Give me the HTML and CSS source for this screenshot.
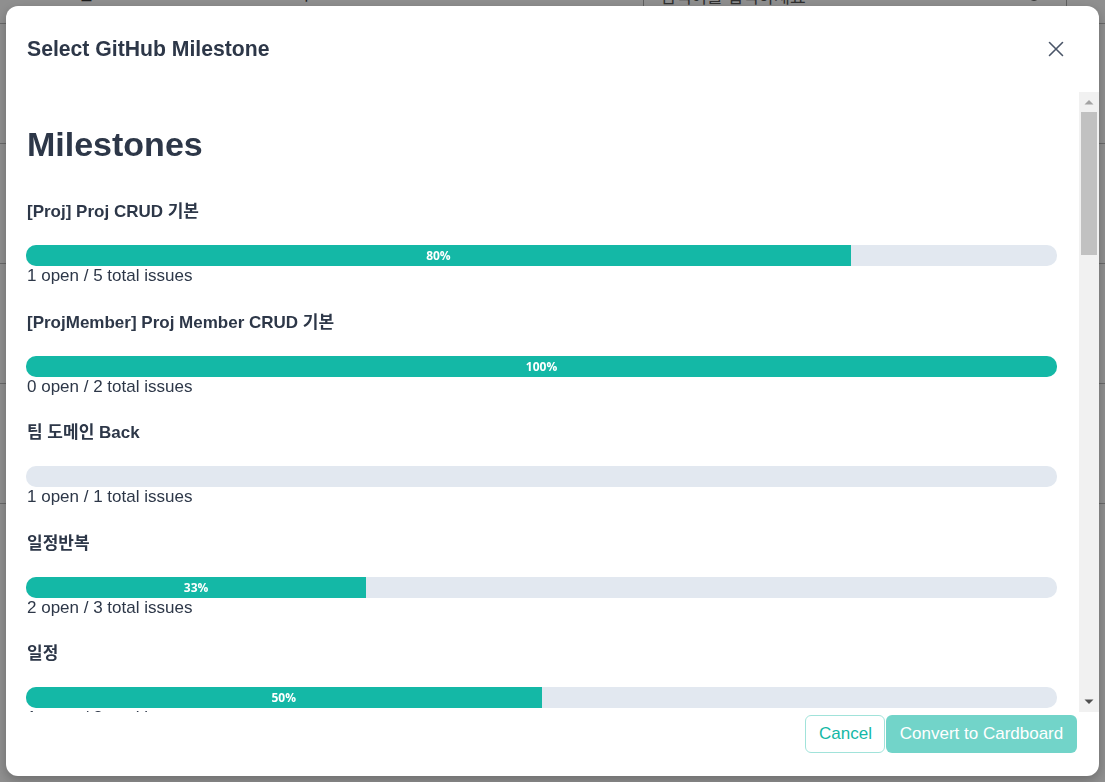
FILE: index.html
```html
<!DOCTYPE html>
<html lang="ko">
<head>
<meta charset="utf-8">
<title>Select GitHub Milestone</title>
<link rel="stylesheet" href="styles.css">
</head>
<body>
<div class="page">
  <div class="page-head">
    <div class="col col-team">팀</div>
    <div class="col col-proj">프로젝트</div>
    <div class="search">
      <span class="search-ph">검색어를 입력하세요</span>
      <svg class="search-ic" width="18" height="18" viewBox="0 0 18 18"><circle cx="8" cy="8" r="6" fill="none" stroke="#333" stroke-width="1.5"/></svg>
    </div>
  </div>
  <div class="page-row"></div>
  <div class="page-row"></div>
  <div class="page-row"></div>
  <div class="page-row"></div>
</div>

<div class="overlay"></div>

<div class="modal" role="dialog" aria-labelledby="modal-title">
  <header class="modal-header">
    <h1 id="modal-title" class="modal-title">Select GitHub Milestone</h1>
    <button class="close-btn" aria-label="Close">
      <svg width="16" height="16" viewBox="0 0 16 16"><path d="M1.5 1.5 L14.5 14.5 M14.5 1.5 L1.5 14.5" stroke="#4a5568" stroke-width="1.6" stroke-linecap="round"/></svg>
    </button>
  </header>

  <div class="modal-body">
    <div class="scroll-area">
      <h2 class="ms-heading">Milestones</h2>
      <ul class="ms-list">
        <li class="ms-item">
          <div class="ms-name">[Proj] Proj CRUD 기본</div>
          <div class="bar"><div class="fill" style="width:80%">80%</div></div>
          <div class="ms-count">1 open / 5 total issues</div>
        </li>
        <li class="ms-item">
          <div class="ms-name">[ProjMember] Proj Member CRUD 기본</div>
          <div class="bar"><div class="fill" style="width:100%">100%</div></div>
          <div class="ms-count">0 open / 2 total issues</div>
        </li>
        <li class="ms-item">
          <div class="ms-name">팀 도메인 Back</div>
          <div class="bar"><div class="fill" style="width:0%"></div></div>
          <div class="ms-count">1 open / 1 total issues</div>
        </li>
        <li class="ms-item">
          <div class="ms-name">일정반복</div>
          <div class="bar"><div class="fill" style="width:33%">33%</div></div>
          <div class="ms-count">2 open / 3 total issues</div>
        </li>
        <li class="ms-item">
          <div class="ms-name">일정</div>
          <div class="bar"><div class="fill" style="width:50%">50%</div></div>
          <div class="ms-count">1 open / 2 total issues</div>
        </li>
      </ul>
    </div>
    <div class="scrollbar" aria-hidden="true">
      <div class="sb-btn">
        <svg width="10" height="6" viewBox="0 0 10 6"><path d="M0.5 5.5 L5 1 L9.5 5.5 Z" fill="#a3a3a3"/></svg>
      </div>
      <div class="sb-track"><div class="sb-thumb"></div></div>
      <div class="sb-btn">
        <svg width="10" height="6" viewBox="0 0 10 6"><path d="M0.5 0.5 L5 5 L9.5 0.5 Z" fill="#505050"/></svg>
      </div>
    </div>
  </div>

  <footer class="modal-footer">
    <button class="btn btn-outline">Cancel</button>
    <button class="btn btn-primary" disabled>Convert to Cardboard</button>
  </footer>
</div>
</body>
</html>
```
FILE: styles.css
```css
* { box-sizing: border-box; }

html, body {
  margin: 0;
  height: 100%;
  overflow: hidden;
}

body {
  font-family: "Liberation Sans", Arial, "Noto Sans CJK KR", sans-serif;
  color: #2d3748;
  background: #ffffff;
}

/* background page (behind overlay) */
.page {
  height: 100%;
}
.page-head {
  height: 48px;
  margin-top: -24px;
  display: flex;
  align-items: flex-end;
  padding-bottom: 18px;
  border-bottom: 1px solid #bbb;
  font-size: 17px;
  color: #333;
  font-family: "Noto Sans CJK KR", sans-serif;
}
.col-team { width: 78px; margin-left: 78px; }
.col-proj { width: 300px; margin-left: 106px; }
.search {
  margin-left: 81px;
  width: 424px;
  height: 40px;
  margin-bottom: -10px;
  border-left: 1px solid #aaa;
  border-right: 1px solid #aaa;
  display: flex;
  align-items: center;
  padding-left: 16px;
  color: #555;
}
.search-ph { flex: 1; }
.search-ic { margin-right: 22px; }
.page-row {
  height: 120px;
  border-bottom: 1px solid #bbb;
}

.overlay {
  position: fixed;
  top: 0;
  left: 0;
  right: 0;
  bottom: 0;
  background: rgba(0, 0, 0, 0.44);
}

/* modal */
.modal {
  position: fixed;
  left: 6px;
  top: 6px;
  width: 1093px;
  height: 770px;
  background: #fff;
  border-radius: 12px;
  box-shadow: 0 4px 12px rgba(0, 0, 0, 0.25);
  display: flex;
  flex-direction: column;
  overflow: hidden;
}

.modal-header {
  height: 86px;
  flex: none;
  display: flex;
  align-items: center;
  justify-content: space-between;
  padding: 0 35px 0 21px;
}
.modal-title {
  margin: 0;
  font-size: 21.2px;
  font-weight: 700;
  line-height: 28px;
  color: #2d3748;
}
.close-btn {
  border: 0;
  background: transparent;
  padding: 0;
  width: 16px;
  height: 16px;
  display: flex;
  cursor: pointer;
}

.modal-body {
  flex: none;
  height: 620px;
  display: flex;
  background: #fff;
}
.scroll-area {
  flex: 1;
  min-width: 0;
  overflow: hidden;
  padding: 32px 22px 0 20px;
}

/* scrollbar (drawn) */
.scrollbar {
  flex: none;
  width: 20px;
  display: flex;
  flex-direction: column;
  background: #f1f1f1;
}
.sb-btn {
  flex: none;
  height: 20px;
  display: flex;
  align-items: center;
  justify-content: center;
}
.sb-track {
  flex: 1;
  padding: 0 2px 0 2px;
}
.sb-thumb {
  height: 143px;
  background: #c1c1c1;
}

.ms-heading {
  margin: 0 0 35px;
  padding-left: 1px;
  font-size: 34px;
  font-weight: 700;
  line-height: 41px;
  color: #2d3748;
}

.ms-list {
  list-style: none;
  margin: 0;
  padding: 0;
  display: flex;
  flex-direction: column;
  gap: 24.5px;
}
.ms-name {
  padding-left: 1px;
  font-size: 17px;
  font-weight: 700;
  line-height: 24px;
  margin-bottom: 21px;
}
.bar {
  height: 21px;
  border-radius: 10px;
  background: #e2e8f0;
  overflow: hidden;
}
.fill {
  height: 100%;
  background: #14b8a6;
  color: #fff;
  font-size: 12px;
  font-weight: 700;
  line-height: 21px;
  text-align: center;
  font-family: "Open Sans", "Liberation Sans", sans-serif;
}
.ms-count {
  padding-left: 1px;
  font-size: 17px;
  line-height: 20px;
  color: #2d3748;
}

.modal-footer {
  flex: none;
  height: 64px;
  display: flex;
  justify-content: flex-end;
  align-items: flex-start;
  padding: 3px 22px 0 0;
}
.btn {
  height: 38px;
  border-radius: 6px;
  font-family: "Liberation Sans", Arial, sans-serif;
  font-size: 17px;
  padding: 0 13px;
  cursor: pointer;
}
.btn-outline {
  width: 80px;
  background: #fff;
  color: #14b8a6;
  border: 1px solid #a1e3da;
  margin-right: 1px;
}
.btn-primary {
  width: 191px;
  border: 0;
  background: #14b8a6;
  color: #fff;
  opacity: 0.6;
  cursor: not-allowed;
}
```
